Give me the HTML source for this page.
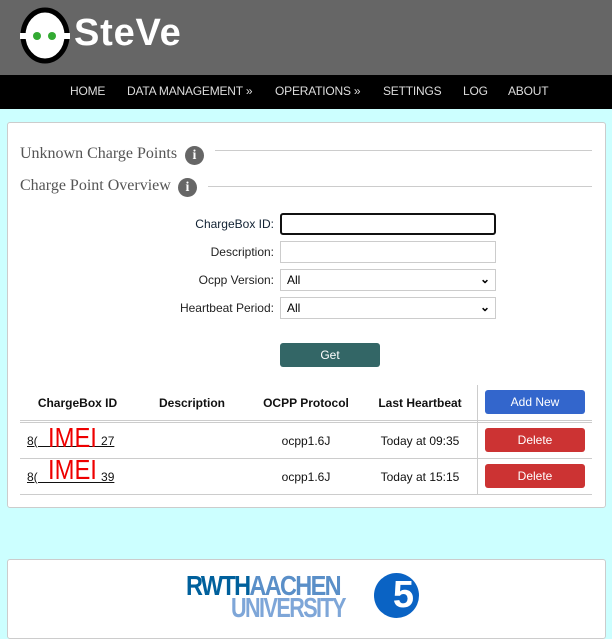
<!DOCTYPE html>
<html><head><style>
*{margin:0;padding:0;box-sizing:border-box}
body{width:612px;height:623px;overflow:hidden;background:#ccffff;font-family:"Liberation Sans",sans-serif;position:relative}
.a{position:absolute}
.hdr{left:0;top:0;width:612px;height:75px;background:#666}
.nav{left:0;top:75px;width:612px;height:34px;background:#000}
.nav span{position:absolute;top:9px;color:#ddd;font-size:12px;letter-spacing:-0.2px}
.card{background:#fff;border:1px solid #ccc;border-radius:3px}
.h{font-family:"Liberation Serif",serif;font-size:16px;color:#555}
.ic{width:19px;height:19px;border-radius:50%;background:#666;color:#fff;font:bold 14px "Liberation Serif",serif;text-align:center;line-height:19px}
.ln{height:1px;background:#ccc}
.lb{font-size:12px;color:#222;text-align:right;width:200px;left:74px}
.in{left:280px;width:216px;height:22px;border:1px solid #ccc;font-size:12px;padding:3px 6px}
.th{font-weight:bold;font-size:12px;color:#111;top:396px;text-align:center}
.btn{color:#fff;font-size:12px;text-align:center;border-radius:3px;line-height:24px;width:100px;left:485px;height:24px}
.td{font-size:12px;color:#111;text-align:center}
</style></head><body>
<div class="a hdr"></div>
<svg class="a" style="left:20px;top:7px" width="50" height="57" viewBox="0 0 50 57">
<ellipse cx="25" cy="28.5" rx="22" ry="25.5" fill="#fff" stroke="#000" stroke-width="5"/>
<rect x="0" y="26" width="6" height="6" fill="#fff"/><rect x="44" y="26" width="6" height="6" fill="#fff"/>
<circle cx="17" cy="29" r="4" fill="#3a3"/><circle cx="32" cy="29" r="4" fill="#3a3"/>
</svg>
<div class="a" style="left:74px;top:12px;color:#fff;font-weight:bold;font-size:38px;letter-spacing:0.8px">SteVe</div>
<div class="a nav"><span style="left:70px">HOME</span><span style="left:127px">DATA MANAGEMENT »</span><span style="left:275px">OPERATIONS »</span><span style="left:383px">SETTINGS</span><span style="left:463px">LOG</span><span style="left:508px">ABOUT</span></div>
<div class="a card" style="left:7px;top:122px;width:599px;height:386px"></div>
<div class="a h" style="left:20px;top:145px">Unknown Charge Points</div>
<div class="a ic" style="left:185px;top:146px">i</div>
<div class="a ln" style="left:215px;top:150px;width:377px"></div>
<div class="a h" style="left:20px;top:177px">Charge Point Overview</div>
<div class="a ic" style="left:178px;top:178px">i</div>
<div class="a ln" style="left:208px;top:186px;width:384px"></div>
<div class="a lb" style="top:217px;color:#123">ChargeBox ID:</div>
<div class="a in" style="top:213px;border:2px solid #111;border-radius:3px"></div>
<div class="a lb" style="top:245px">Description:</div>
<div class="a in" style="top:241px"></div>
<div class="a lb" style="top:273px">Ocpp Version:</div>
<div class="a in" style="top:269px">All<span style="position:absolute;right:5px;top:2px;font-weight:bold">⌄</span></div>
<div class="a lb" style="top:301px">Heartbeat Period:</div>
<div class="a in" style="top:297px">All<span style="position:absolute;right:5px;top:2px;font-weight:bold">⌄</span></div>
<div class="a btn" style="left:280px;top:343px;background:#336666">Get</div>
<div class="a th" style="left:20px;width:115px">ChargeBox ID</div>
<div class="a th" style="left:140px;width:104px">Description</div>
<div class="a th" style="left:250px;width:112px">OCPP Protocol</div>
<div class="a th" style="left:365px;width:110px">Last Heartbeat</div>
<div class="a" style="left:477px;top:385px;width:1px;height:109px;background:#ccc"></div>
<div class="a btn" style="top:390px;background:#3366cc">Add New</div>
<div class="a ln" style="left:20px;top:420px;width:572px"></div>
<div class="a ln" style="left:20px;top:422px;width:572px"></div>
<div class="a ln" style="left:20px;top:458px;width:572px"></div>
<div class="a ln" style="left:20px;top:494px;width:572px"></div>
<div class="a td" style="left:27px;top:434px;text-decoration:underline;white-space:pre">8(                   27</div>
<div class="a" style="left:48px;top:422px;color:#e00;font-size:28px;transform:scaleX(.85);transform-origin:left">IMEI</div>
<div class="a td" style="left:27px;top:470px;text-decoration:underline;white-space:pre">8(                   39</div>
<div class="a" style="left:48px;top:454px;color:#e00;font-size:28px;transform:scaleX(.85);transform-origin:left">IMEI</div>
<div class="a td" style="left:250px;width:112px;top:434px">ocpp1.6J</div>
<div class="a td" style="left:365px;width:110px;top:434px">Today at 09:35</div>
<div class="a td" style="left:250px;width:112px;top:470px">ocpp1.6J</div>
<div class="a td" style="left:365px;width:110px;top:470px">Today at 15:15</div>
<div class="a btn" style="top:428px;background:#cc3333">Delete</div>
<div class="a btn" style="top:464px;background:#cc3333">Delete</div>
<div class="a card" style="left:7px;top:559px;width:599px;height:80px"></div>
<div class="a" style="left:186px;top:570px;font-weight:bold;font-size:28px;letter-spacing:-2px;color:#00609c;transform:scaleX(.84);transform-origin:left;white-space:nowrap">RWTH<span style="color:#5a8fc8">AACHEN</span></div>
<div class="a" style="left:231px;top:592px;font-weight:bold;font-size:28px;letter-spacing:-2px;color:#7ea6d8;transform:scaleX(.77);transform-origin:left">UNIVERSITY</div>
<div class="a" style="left:374px;top:573px;width:45px;height:45px;border-radius:50%;background:#0a63c4;color:#fff;font-weight:bold;font-size:38px;line-height:45px;text-align:right;padding-right:5px">5</div>
</body></html>
